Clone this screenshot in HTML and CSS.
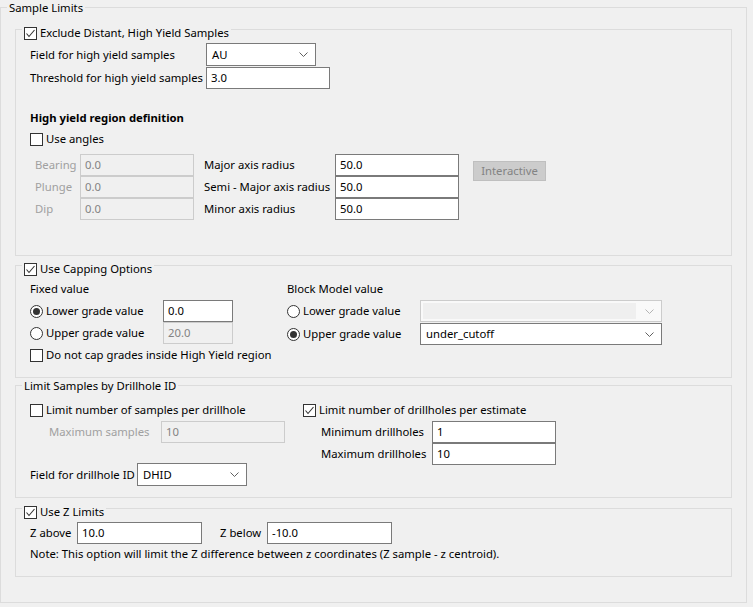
FILE: index.html
```html
<!DOCTYPE html>
<html>
<head>
<meta charset="utf-8">
<link rel="stylesheet" href="styles.css">
</head>
<body>
<div class="group outer">
  <div class="gtitle">Sample Limits</div>

  <div class="group g1">
    <div class="gtitle"><span class="chk"><svg width="11" height="11" viewBox="0 0 11 11"><path d="M1.5 5.5 L4 8.5 L9.5 2" fill="none" stroke="#333" stroke-width="1.1"/></svg></span>Exclude Distant, High Yield Samples</div>
    <div class="row r-field">
      <span class="lbl l176">Field for high yield samples</span>
      <div class="combo cw110 h23"><span class="ctext">AU</span><svg class="chev" width="9" height="5" viewBox="0 0 9 5"><path d="M0.5 0.5 L4.5 4.5 L8.5 0.5" fill="none" stroke="#606060" stroke-width="1"/></svg></div>
    </div>
    <div class="row r-thresh">
      <span class="lbl l176">Threshold for high yield samples</span>
      <div class="input iw124">3.0</div>
    </div>
    <div class="heading">High yield region definition</div>
    <div class="chkrow r-angles"><span class="chk"></span>Use angles</div>
    <div class="angles">
      <div class="agrid">
        <span class="dlbl">Bearing</span><div class="input dis">0.0</div>
        <span class="dlbl">Plunge</span><div class="input dis">0.0</div>
        <span class="dlbl">Dip</span><div class="input dis">0.0</div>
      </div>
      <div class="rgrid">
        <span class="lbl">Major axis radius</span><div class="input">50.0</div>
        <span class="lbl">Semi - Major axis radius</span><div class="input">50.0</div>
        <span class="lbl">Minor axis radius</span><div class="input">50.0</div>
      </div>
      <div class="btn">Interactive</div>
    </div>
  </div>

  <div class="group g2">
    <div class="gtitle"><span class="chk"><svg width="11" height="11" viewBox="0 0 11 11"><path d="M1.5 5.5 L4 8.5 L9.5 2" fill="none" stroke="#333" stroke-width="1.1"/></svg></span>Use Capping Options</div>
    <div class="cols">
      <div class="c2left">
        <div class="sub">Fixed value</div>
        <div class="row rrow first">
          <span class="radlbl"><span class="radio on"></span>Lower grade value</span>
          <div class="input iw70">0.0</div>
        </div>
        <div class="row rrow">
          <span class="radlbl"><span class="radio"></span>Upper grade value</span>
          <div class="input iw70 dis">20.0</div>
        </div>
        <div class="chkrow r-nocap"><span class="chk"></span>Do not cap grades inside High Yield region</div>
      </div>
      <div class="c2right">
        <div class="sub">Block Model value</div>
        <div class="row rrow first">
          <span class="radlbl"><span class="radio"></span>Lower grade value</span>
          <div class="combo cw242 dis"><span class="cinner"></span><svg class="chev" width="9" height="5" viewBox="0 0 9 5"><path d="M0.5 0.5 L4.5 4.5 L8.5 0.5" fill="none" stroke="#b4b4b4" stroke-width="1"/></svg></div>
        </div>
        <div class="row rrow second">
          <span class="radlbl"><span class="radio on"></span>Upper grade value</span>
          <div class="combo cw242"><span class="ctext">under_cutoff</span><svg class="chev" width="9" height="5" viewBox="0 0 9 5"><path d="M0.5 0.5 L4.5 4.5 L8.5 0.5" fill="none" stroke="#606060" stroke-width="1"/></svg></div>
        </div>
      </div>
    </div>
  </div>

  <div class="group g3">
    <div class="gtitle">Limit Samples by Drillhole ID</div>
    <div class="cols">
      <div class="c3left">
        <div class="chkrow r-lim"><span class="chk"></span>Limit number of samples per drillhole</div>
        <div class="row r-max">
          <span class="dlbl l-maxs">Maximum samples</span>
          <div class="input iw124 dis">10</div>
        </div>
        <div class="row r-dhid">
          <span class="lbl l107">Field for drillhole ID</span>
          <div class="combo cw110 h23"><span class="ctext">DHID</span><svg class="chev" width="9" height="5" viewBox="0 0 9 5"><path d="M0.5 0.5 L4.5 4.5 L8.5 0.5" fill="none" stroke="#606060" stroke-width="1"/></svg></div>
        </div>
      </div>
      <div class="c3right">
        <div class="chkrow r-lim"><span class="chk"><svg width="11" height="11" viewBox="0 0 11 11"><path d="M1.5 5.5 L4 8.5 L9.5 2" fill="none" stroke="#333" stroke-width="1.1"/></svg></span>Limit number of drillholes per estimate</div>
        <div class="row r-max">
          <span class="lbl l-mind">Minimum drillholes</span>
          <div class="input iw124">1</div>
        </div>
        <div class="row">
          <span class="lbl l-mind">Maximum drillholes</span>
          <div class="input iw124">10</div>
        </div>
      </div>
    </div>
  </div>

  <div class="group g4">
    <div class="gtitle"><span class="chk"><svg width="11" height="11" viewBox="0 0 11 11"><path d="M1.5 5.5 L4 8.5 L9.5 2" fill="none" stroke="#333" stroke-width="1.1"/></svg></span>Use Z Limits</div>
    <div class="row r-z">
      <span class="lbl l47">Z above</span>
      <div class="input iw125">10.0</div>
      <span class="lbl l47 zb">Z below</span>
      <div class="input iw125">-10.0</div>
    </div>
    <div class="note">Note: This option will limit the Z difference between z coordinates (Z sample - z centroid).</div>
  </div>
</div>
</body>
</html>
```

FILE: styles.css
```css
body {
  margin: 0;
  background: #f0f0f0;
  font-family: "Noto Sans", "Open Sans", sans-serif;
  font-size: 11.3px;
  line-height: 16px;
  color: #000;
}

.group {
  border: 1px solid #dcdcdc;
  padding: 0 14px;
}

.outer {
  margin: 7px 6px 0 0;
  padding-bottom: 25px;
}

.gtitle {
  display: flex;
  align-items: center;
  gap: 3px;
  width: max-content;
  height: 16px;
  padding: 0 2px;
  margin-left: -8px;
  background: #f0f0f0;
  white-space: nowrap;
}

.outer > .gtitle { margin-top: -8px; }

.g1 { margin-top: 13px; padding-bottom: 35px; }
.g1 > .gtitle, .g2 > .gtitle, .g4 > .gtitle { margin-top: -5px; }

.g2 { margin-top: 9px; padding-bottom: 14px; }
.g3 { margin-top: 7px; padding-bottom: 11px; }
.g3 > .gtitle { margin-top: -8px; }
.g4 { margin-top: 10px; padding-bottom: 14px; }

.chk {
  box-sizing: border-box;
  width: 13px;
  height: 13px;
  border: 1px solid #333;
  background: #fff;
  display: inline-flex;
  align-items: center;
  justify-content: center;
  flex: none;
}

.radio {
  box-sizing: border-box;
  width: 13px;
  height: 13px;
  border: 1px solid #333;
  border-radius: 50%;
  background: #fff;
  display: inline-flex;
  align-items: center;
  justify-content: center;
  flex: none;
}
.radio.on::after {
  content: "";
  width: 7px;
  height: 7px;
  border-radius: 50%;
  background: #333;
}

.row {
  display: flex;
  align-items: center;
}

.lbl, .dlbl { white-space: nowrap; flex: none; }
.dlbl { color: #a0a0a0; }

.l176 { width: 176px; }
.l107 { width: 107px; }
.l47 { width: 47px; }

.input {
  box-sizing: border-box;
  height: 22px;
  border: 1px solid #7a7a7a;
  background: #fff;
  padding-left: 4px;
  line-height: 20px;
  white-space: nowrap;
  flex: none;
}
.input.dis {
  border-color: #cccccc;
  background: #f0f0f0;
  color: #838383;
}

.iw124 { width: 124px; }
.iw125 { width: 125px; }
.iw70 { width: 70px; }

.combo {
  box-sizing: border-box;
  height: 22px;
  border: 1px solid #7a7a7a;
  background: #fff;
  display: flex;
  align-items: center;
  padding: 0 7px 0 5px;
  flex: none;
}
.combo.h23 { height: 23px; }
.combo .ctext { flex: 1; }
.combo.dis {
  border-color: #cccccc;
  background: #f9f9f9;
  padding: 2px 7px 2px 2px;
  align-items: stretch;
}
.combo .cinner {
  flex: 1;
  background: #efefef;
  margin-right: 9px;
}
.combo.dis .chev { align-self: center; }
.chev { flex: none; }
.cw110 { width: 110px; }
.cw242 { width: 242px; }

.r-field { margin-top: 2px; height: 23px; }
.r-thresh { margin-top: 1px; height: 22px; }

.heading {
  font-weight: bold;
  margin-top: 21px;
}

.chkrow {
  display: flex;
  align-items: center;
  gap: 3px;
  height: 16px;
  white-space: nowrap;
}
.r-angles { margin-top: 5px; }

.angles {
  display: flex;
  align-items: flex-start;
  margin-top: 7px;
}
.agrid {
  display: grid;
  grid-template-columns: 50px 114px;
  grid-auto-rows: 22px;
  align-items: center;
}
.agrid .dlbl { padding-left: 5px; }
.agrid .input { height: 22px; }
.rgrid {
  margin-left: 10px;
  display: grid;
  grid-template-columns: 131px 124px;
  grid-auto-rows: 22px;
  align-items: center;
}
.btn {
  box-sizing: border-box;
  margin: 7px 0 0 14px;
  width: 73px;
  height: 20px;
  line-height: 18px;
  border: 1px solid #bfbfbf;
  background: #cccccc;
  color: #838383;
  text-align: center;
}

.cols { display: flex; }
.c2left { width: 257px; flex: none; }
.c2right { flex: 1; }
.sub { margin-top: 4px; }
.rrow { height: 22px; }
.rrow.first { margin-top: 3px; }
.rrow.second { margin-top: 1px; }
.radlbl {
  width: 133px;
  display: flex;
  align-items: center;
  gap: 3px;
  white-space: nowrap;
  flex: none;
}
.r-nocap { margin-top: 3px; }

.c3left { width: 273px; flex: none; }
.c3right { flex: 1; }
.r-lim { margin-top: 8px; }
.r-max { margin-top: 3px; height: 22px; }
.c3right .row { height: 22px; }
.l-maxs { width: 112px; padding-left: 19px; }
.l-mind { width: 111px; padding-left: 18px; }
.r-dhid { margin-top: 20px; height: 23px; }

.r-z { margin-top: 2px; height: 22px; }
.zb { margin-left: 18px; }
.note { margin-top: 2px; white-space: nowrap; }
```
